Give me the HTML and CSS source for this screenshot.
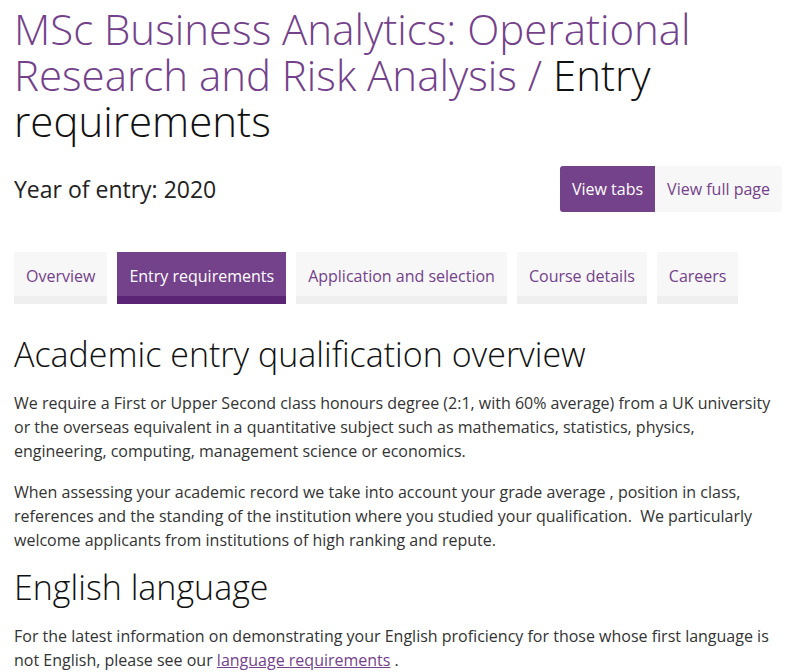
FILE: index.html
```html
<!DOCTYPE html>
<html lang="en">
<head>
<meta charset="utf-8">
<title>Entry requirements</title>
<link rel="stylesheet" href="styles.css">
</head>
<body>
<div class="page">
  <h1 class="title"><span class="crumb">MSc Business Analytics: Operational Research and Risk Analysis / </span>Entry requirements</h1>
  <div class="year-row">
    <div class="year">Year of entry: 2020</div>
    <div class="view-toggle">
      <span class="toggle active">View tabs</span>
      <span class="toggle">View full page</span>
    </div>
  </div>
  <nav class="tabs">
    <span class="tab">Overview</span>
    <span class="tab active">Entry requirements</span>
    <span class="tab">Application and selection</span>
    <span class="tab">Course details</span>
    <span class="tab">Careers</span>
  </nav>
  <h2 class="heading">Academic entry qualification overview</h2>
  <p class="text">We require a First or Upper Second class honours degree (2:1, with 60% average) from a UK university or the overseas equivalent in a quantitative subject such as mathematics, statistics, physics, engineering, computing, management science or economics.</p>
  <p class="text">When assessing your academic record we take into account your grade average , position in class, references and the standing of the institution where you studied your qualification.&nbsp; We particularly welcome applicants from institutions of high ranking and repute.</p>
  <h2 class="heading">English language</h2>
  <p class="text">For the latest information on demonstrating your English proficiency for those whose first language is not English, please see our <a href="#" class="link">language requirements</a> .</p>
</div>
</body>
</html>
```
FILE: styles.css
```css
html, body {
  margin: 0;
  padding: 0;
  background: #fff;
}
body {
  font-family: "Open Sans", "Liberation Sans", sans-serif;
  color: #333;
}
.page {
  padding: 0 4px 0 14px;
}
.title {
  margin: 0;
  padding-top: 6px;
  font-weight: 300;
  font-size: 42px;
  line-height: 46px;
  color: #111;
}
.crumb {
  color: #74418b;
}
.year-row {
  display: flex;
  justify-content: space-between;
  align-items: center;
  margin-top: 22px;
}
.year {
  font-size: 23px;
  color: #222;
}
.view-toggle {
  display: flex;
  border-radius: 3px;
  overflow: hidden;
  background: #f7f7f7;
}
.toggle {
  font-size: 16px;
  line-height: 46px;
  padding: 0 12px;
  color: #74418b;
}
.toggle.active {
  background: #74418b;
  color: #fff;
}
.tabs {
  display: flex;
  gap: 10px;
  margin-top: 40px;
  margin-bottom: 28px;
}
.tab {
  font-size: 16px;
  line-height: 40px;
  padding: 4px 12px 0;
  background: #f7f7f7;
  border-bottom: 8px solid #efefef;
  color: #74418b;
}
.tab.active {
  background: #74418b;
  border-bottom-color: #5c2474;
  color: #fff;
}
.heading {
  margin: -4px 0 15px;
  font-weight: 300;
  font-size: 34px;
  line-height: 44px;
  color: #111;
}
.tabs + .heading {
  margin-top: 0;
}
.text {
  margin: 0 0 17px;
  font-size: 16px;
  line-height: 24px;
}
.link {
  color: #74418b;
}
```
